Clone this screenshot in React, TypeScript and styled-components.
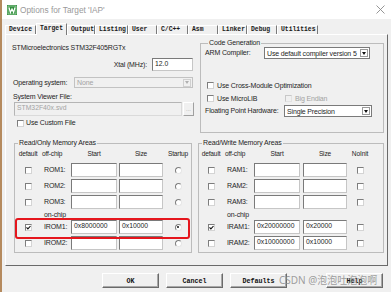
import React from 'react';
import styled, { createGlobalStyle } from 'styled-components';

const GlobalStyle = createGlobalStyle`
  html, body {
    margin: 0;
    padding: 0;
  }
  body {
    width: 391px;
    height: 292px;
    overflow: hidden;
    background: #b58a5e;
    font-family: "Liberation Sans", Arial, sans-serif;
  }
`;

const Window = styled.div`
  position: relative;
  margin-left: 2px;
  width: 389px;
  height: 292px;
  background: #f0f0f0;
  display: flex;
  flex-direction: column;
  overflow: hidden;
`;

const TitleBar = styled.div`
  height: 19px;
  flex: none;
  background: #fff;
  display: flex;
  align-items: center;
  padding: 0 6px 0 5px;
  gap: 3px;
`;

const TitleText = styled.span`
  flex: 1;
  font-size: 8.3px;
  color: #9a9a9a;
  white-space: nowrap;
`;

const TabRow = styled.div`
  height: 15px;
  flex: none;
  display: flex;
  align-items: flex-end;
  padding-left: 3px;
`;

const Tab = styled.div<{ $w: number; $active?: boolean }>`
  width: ${({ $w }) => $w}px;
  height: ${({ $active }) => ($active ? 12 : 9)}px;
  box-sizing: border-box;
  padding-left: 3px;
  font: bold 6.4px/${({ $active }) => ($active ? 10 : 8)}px "Liberation Mono", monospace;
  color: #1a1a1a;
  border-top: 1px solid #fff;
  border-left: 1px solid #fff;
  border-right: 1px solid #7a7a7a;
  margin-bottom: ${({ $active }) => ($active ? -1 : 0)}px;
  background: #f0f0f0;
  position: relative;
  z-index: ${({ $active }) => ($active ? 1 : 0)};
  white-space: nowrap;
`;

const Panel = styled.div`
  margin: 0 3px;
  height: 232px;
  flex: none;
  box-sizing: border-box;
  border: 1px solid;
  border-color: #fff #6a6a6a #6a6a6a #fff;
  padding: 4px 3px 0 6px;
  display: flex;
  flex-direction: column;
`;

const TopSection = styled.div`
  display: flex;
  gap: 5px;
`;

const LeftColumn = styled.div`
  width: 183px;
  flex: none;
  display: flex;
  flex-direction: column;
  padding-top: 4px;
`;

const BottomSection = styled.div`
  display: flex;
  gap: 6px;
  margin: 6px 0 0 2px;
`;

const Group = styled.fieldset<{ $pad?: string; $w?: number }>`
  margin: 0;
  padding: ${({ $pad }) => $pad || '0'};
  min-width: 0;
  ${({ $w }) => ($w ? `width: ${$w}px;` : 'flex: 1;')}
  box-sizing: border-box;
  border: 1px solid #bcbcbc;
  display: flex;
  flex-direction: column;
  position: relative;
`;

const Legend = styled.legend`
  padding: 0 1px;
  margin-left: 3px;
  font-size: 7px;
  line-height: 8px;
  letter-spacing: -0.15px;
  color: #1e1e1e;
`;

const Text = styled.span<{ $muted?: boolean; $w?: number }>`
  font-size: 7px;
  line-height: 10px;
  letter-spacing: -0.15px;
  color: ${({ $muted }) => ($muted ? '#a3a3a3' : '#1e1e1e')};
  white-space: nowrap;
  ${({ $w }) => ($w ? `width: ${$w}px; flex: none;` : '')}
`;

const Line = styled.div<{ $top?: number; $h?: number; $pl?: number; $justify?: string; $gap?: number }>`
  display: flex;
  align-items: center;
  margin-top: ${({ $top }) => $top || 0}px;
  height: ${({ $h }) => $h || 10}px;
  padding-left: ${({ $pl }) => $pl || 0}px;
  justify-content: ${({ $justify }) => $justify || 'flex-start'};
  gap: ${({ $gap }) => $gap || 0}px;
`;

const Box = styled.div<{ $w?: number; $h?: number; $disabled?: boolean }>`
  ${({ $w }) => ($w ? `width: ${$w}px; flex: none;` : '')}
  height: ${({ $h }) => $h || 14}px;
  box-sizing: border-box;
  border: 1px solid;
  border-color: ${({ $disabled }) =>
    $disabled ? '#b5b5b5 #dadada #dadada #b5b5b5' : '#7a7a7a #c6c6c6 #c6c6c6 #7a7a7a'};
  background: ${({ $disabled }) => ($disabled ? '#f0f0f0' : '#fff')};
  padding: 1px 2px 0;
  font-size: 6.8px;
  line-height: 8px;
  color: ${({ $disabled }) => ($disabled ? '#a3a3a3' : '#1e1e1e')};
  white-space: nowrap;
  overflow: hidden;
`;

const SelectBox = styled.div<{ $w: number; $h?: number; $disabled?: boolean }>`
  width: ${({ $w }) => $w}px;
  height: ${({ $h }) => $h || 12}px;
  flex: none;
  box-sizing: border-box;
  border: 1px solid ${({ $disabled }) => ($disabled ? '#c2c2c2' : '#7a7a7a')};
  background: ${({ $disabled }) => ($disabled ? '#f0f0f0' : '#fff')};
  display: flex;
  align-items: center;
  padding: 0 1px 0 2px;
  font-size: 7px;
  letter-spacing: -0.15px;
  color: ${({ $disabled }) => ($disabled ? '#a3a3a3' : '#1e1e1e')};
  white-space: nowrap;
`;

const Arrow = styled.span<{ $disabled?: boolean }>`
  margin-left: auto;
  width: 8px;
  height: 8px;
  box-sizing: border-box;
  border: 1px solid ${({ $disabled }) => ($disabled ? '#d0d0d0' : '#9a9a9a')};
  background: ${({ $disabled }) => ($disabled ? '#f0f0f0' : '#fff')};
  display: flex;
  align-items: center;
  justify-content: center;
  &::after {
    content: '';
    border-left: 2.5px solid transparent;
    border-right: 2.5px solid transparent;
    border-top: 3px solid ${({ $disabled }) => ($disabled ? '#b0b0b0' : '#111')};
  }
`;

const BrowseButton = styled.div`
  width: 11px;
  height: 14px;
  box-sizing: border-box;
  border: 1px solid;
  border-color: #fff #a0a0a0 #a0a0a0 #fff;
  font-size: 6px;
  line-height: 12px;
  color: #a3a3a3;
  text-align: center;
  margin-left: 1px;
`;

const CheckBox = styled.span<{ $disabled?: boolean }>`
  width: 7px;
  height: 7px;
  flex: none;
  box-sizing: border-box;
  border: 1px solid;
  border-color: ${({ $disabled }) =>
    $disabled ? '#c8c8c8 #e2e2e2 #e2e2e2 #c8c8c8' : '#7d7d7d #d4d4d4 #d4d4d4 #7d7d7d'};
  background: ${({ $disabled }) => ($disabled ? '#f0f0f0' : '#fff')};
  display: inline-flex;
  align-items: center;
  justify-content: center;
`;

const Radio = styled.span<{ $on?: boolean }>`
  width: 7px;
  height: 7px;
  box-sizing: border-box;
  border-radius: 50%;
  border: 1px solid;
  border-color: #7d7d7d #e6e6e6 #e6e6e6 #7d7d7d;
  background: #fff;
  display: inline-flex;
  align-items: center;
  justify-content: center;
  &::after {
    content: '';
    width: 2px;
    height: 2px;
    border-radius: 50%;
    background: ${({ $on }) => ($on ? '#111' : 'transparent')};
  }
`;

const Check = ({ checked, disabled }: { checked?: boolean; disabled?: boolean }) => (
  <CheckBox $disabled={disabled}>
    {checked && (
      <svg width="5" height="5" viewBox="0 0 5 5">
        <path d="M0.5 2.4 L1.9 3.9 L4.5 1" fill="none" stroke="#111" strokeWidth="1.1" />
      </svg>
    )}
  </CheckBox>
);

const MemGrid = styled.div<{ $cols: string; $gap: number; $mark?: boolean }>`
  display: grid;
  grid-template-columns: ${({ $cols }) => $cols};
  column-gap: ${({ $gap }) => $gap}px;
  align-items: center;
  height: 14px;
  position: relative;
  ${({ $mark }) =>
    $mark
      ? `&::after {
    content: '';
    position: absolute;
    left: -1px;
    right: 1px;
    top: -2px;
    bottom: -5px;
    border: 2px solid #e5161d;
    border-radius: 3px;
    z-index: 2;
    pointer-events: none;
  }`
      : ''}
`;

const HeadGrid = styled(MemGrid)`
  height: 12px;
  align-items: start;
`;

const MemRows = styled.div`
  display: flex;
  flex-direction: column;
  gap: 2px;
  padding: 2px 0 2px 1px;
`;

const Cell = styled.div<{ $align?: string }>`
  display: flex;
  justify-content: ${({ $align }) => $align || 'center'};
  align-items: center;
  min-width: 0;
`;

const RowLabel = styled(Text)`
  padding-left: 2px;
`;

const HeadText = styled(Text)`
  font-size: 6.6px;
`;

const OnChip = styled(Text)`
  height: 7px;
  line-height: 7px;
  padding-left: 2px;
`;

const ButtonRow = styled.div`
  display: flex;
  justify-content: flex-end;
  gap: 7px;
  padding: 7px 8px 0 0;
`;

const Button = styled.button<{ $spaced?: boolean }>`
  width: 57px;
  height: 15px;
  box-sizing: border-box;
  padding: 0;
  margin: 0 0 0 ${({ $spaced }) => ($spaced ? 32 : 0)}px;
  border: 1px solid;
  border-color: #fff #6a6a6a #6a6a6a #fff;
  box-shadow: inset -1px -1px 0 #a8a8a8;
  background: #f0f0f0;
  font: bold 6.7px "Liberation Mono", monospace;
  color: #111;
`;

const Watermark = styled.div`
  position: absolute;
  left: 277px;
  top: 273px;
  font: 10px/14px "Noto Sans", "Noto Sans CJK SC", sans-serif;
  color: rgba(140, 140, 140, 0.85);
  white-space: nowrap;
  pointer-events: none;
`;

type MemEntry = { label: string; start?: string; size?: string; def?: boolean; last?: boolean; mark?: boolean };

const tabs: [string, number][] = [
  ['Device', 31],
  ['Target', 31],
  ['Output', 28],
  ['Listing', 33],
  ['User', 29],
  ['C/C++', 31],
  ['Asm', 30],
  ['Linker', 29],
  ['Debug', 30],
  ['Utilities', 41],
];

const romOff: MemEntry[] = [{ label: 'ROM1:' }, { label: 'ROM2:' }, { label: 'ROM3:' }];
const romOn: MemEntry[] = [
  { label: 'IROM1:', start: '0x8000000', size: '0x10000', def: true, last: true, mark: true },
  { label: 'IROM2:' },
];
const ramOff: MemEntry[] = [{ label: 'RAM1:' }, { label: 'RAM2:' }, { label: 'RAM3:' }];
const ramOn: MemEntry[] = [
  { label: 'IRAM1:', start: '0x20000000', size: '0x20000', def: true },
  { label: 'IRAM2:', start: '0x10000000', size: '0x10000' },
];

function MemoryGroup({
  title,
  width,
  cols,
  gap,
  lastHead,
  radio,
  offChip,
  onChip,
}: {
  title: string;
  width: number;
  cols: string;
  gap: number;
  lastHead: string;
  radio?: boolean;
  offChip: MemEntry[];
  onChip: MemEntry[];
}) {
  const row = (r: MemEntry) => (
    <MemGrid key={r.label} $cols={cols} $gap={gap} $mark={r.mark}>
      <Cell>
        <Check checked={r.def} />
      </Cell>
      <Cell $align="flex-start">
        <RowLabel>{r.label}</RowLabel>
      </Cell>
      <Box>{r.start}</Box>
      <Box>{r.size}</Box>
      <Cell>{radio ? <Radio $on={r.last} /> : <Check checked={r.last} />}</Cell>
    </MemGrid>
  );
  return (
    <Group $w={width}>
      <Legend>{title}</Legend>
      <MemRows>
        <HeadGrid $cols={cols} $gap={gap}>
          <Cell>
            <HeadText>default</HeadText>
          </Cell>
          <Cell $align="flex-start">
            <HeadText>off-chip</HeadText>
          </Cell>
          <Cell>
            <HeadText>Start</HeadText>
          </Cell>
          <Cell>
            <HeadText>Size</HeadText>
          </Cell>
          <Cell>
            <HeadText>{lastHead}</HeadText>
          </Cell>
        </HeadGrid>
        {offChip.map(row)}
        <MemGrid $cols={cols} $gap={gap} style={{ height: 7 }}>
          <span />
          <OnChip>on-chip</OnChip>
        </MemGrid>
        {onChip.map(row)}
      </MemRows>
    </Group>
  );
}

function AppIcon() {
  return (
    <svg width="10" height="10" viewBox="0 0 10 10">
      <rect x="0" y="0" width="10" height="10" fill="#2f8f3c" />
      <rect x="1" y="1" width="8" height="8" fill="none" stroke="#cfe9cf" strokeWidth="0.6" />
      <path d="M2 2.5 L3.4 7.5 L5 4 L6.6 7.5 L8 2.5" fill="none" stroke="#fff" strokeWidth="1.2" />
    </svg>
  );
}

function CloseIcon() {
  return (
    <svg width="9" height="9" viewBox="0 0 9 9">
      <path d="M0.5 0.5 L8.5 8.5 M8.5 0.5 L0.5 8.5" stroke="#8a8a8a" strokeWidth="0.9" />
    </svg>
  );
}

export default function App() {
  return (
    <>
      <GlobalStyle />
      <Window>
        <TitleBar>
          <AppIcon />
          <TitleText>Options for Target 'IAP'</TitleText>
          <CloseIcon />
        </TitleBar>

        <TabRow>
          {tabs.map(([name, w]) => (
            <Tab key={name} $w={w} $active={name === 'Target'}>
              {name}
            </Tab>
          ))}
        </TabRow>

        <Panel>
          <TopSection>
            <LeftColumn>
              <Text>STMicroelectronics STM32F405RGTx</Text>
              <Line $top={5} $h={13} $justify="flex-end" $gap={5} style={{ paddingRight: 2 }}>
                <Text>Xtal (MHz):</Text>
                <Box $w={41} $h={13}>12.0</Box>
              </Line>
              <Line $top={6} $h={11} $pl={1}>
                <Text $w={61}>Operating system:</Text>
                <SelectBox $w={119} $h={11} $disabled>
                  None
                  <Arrow $disabled />
                </SelectBox>
              </Line>
              <Line $top={4} $pl={1}>
                <Text>System Viewer File:</Text>
              </Line>
              <Line $h={14} $pl={2}>
                <Box $w={168} $disabled>STM32F40x.svd</Box>
                <BrowseButton>...</BrowseButton>
              </Line>
              <Line $top={2} $pl={5} $gap={2}>
                <Check />
                <Text>Use Custom File</Text>
              </Line>
            </LeftColumn>

            <Group $pad="0 4px 15px 4px">
              <Legend>Code Generation</Legend>
              <Line $h={12}>
                <Text $w={59}>ARM Compiler:</Text>
                <SelectBox $w={106}>
                  Use default compiler version 5
                  <Arrow />
                </SelectBox>
              </Line>
              <Line $top={21} $h={11} $pl={2} $gap={3}>
                <Check />
                <Text>Use Cross-Module Optimization</Text>
              </Line>
              <Line $top={2} $h={11} $pl={2}>
                <Line $gap={3} style={{ width: 78 }}>
                  <Check />
                  <Text>Use MicroLIB</Text>
                </Line>
                <Line $gap={3}>
                  <Check disabled />
                  <Text $muted>Big Endian</Text>
                </Line>
              </Line>
              <Line $top={1} $h={12}>
                <Text $w={79}>Floating Point Hardware:</Text>
                <SelectBox $w={88}>
                  Single Precision
                  <Arrow />
                </SelectBox>
              </Line>
            </Group>
          </TopSection>

          <BottomSection>
            <MemoryGroup
              title="Read/Only Memory Areas"
              width={178}
              cols="24px 27px 46px 44px 26px"
              gap={2}
              lastHead="Startup"
              radio
              offChip={romOff}
              onChip={romOn}
            />
            <MemoryGroup
              title="Read/Write Memory Areas"
              width={186}
              cols="22px 26px 46px 44px 20px"
              gap={3}
              lastHead="NoInit"
              offChip={ramOff}
              onChip={ramOn}
            />
          </BottomSection>
        </Panel>

        <ButtonRow>
          <Button>OK</Button>
          <Button>Cancel</Button>
          <Button>Defaults</Button>
          <Button $spaced>Help</Button>
        </ButtonRow>

        <Watermark>CSDN @泡泡吐泡泡啊</Watermark>
      </Window>
    </>
  );
}
